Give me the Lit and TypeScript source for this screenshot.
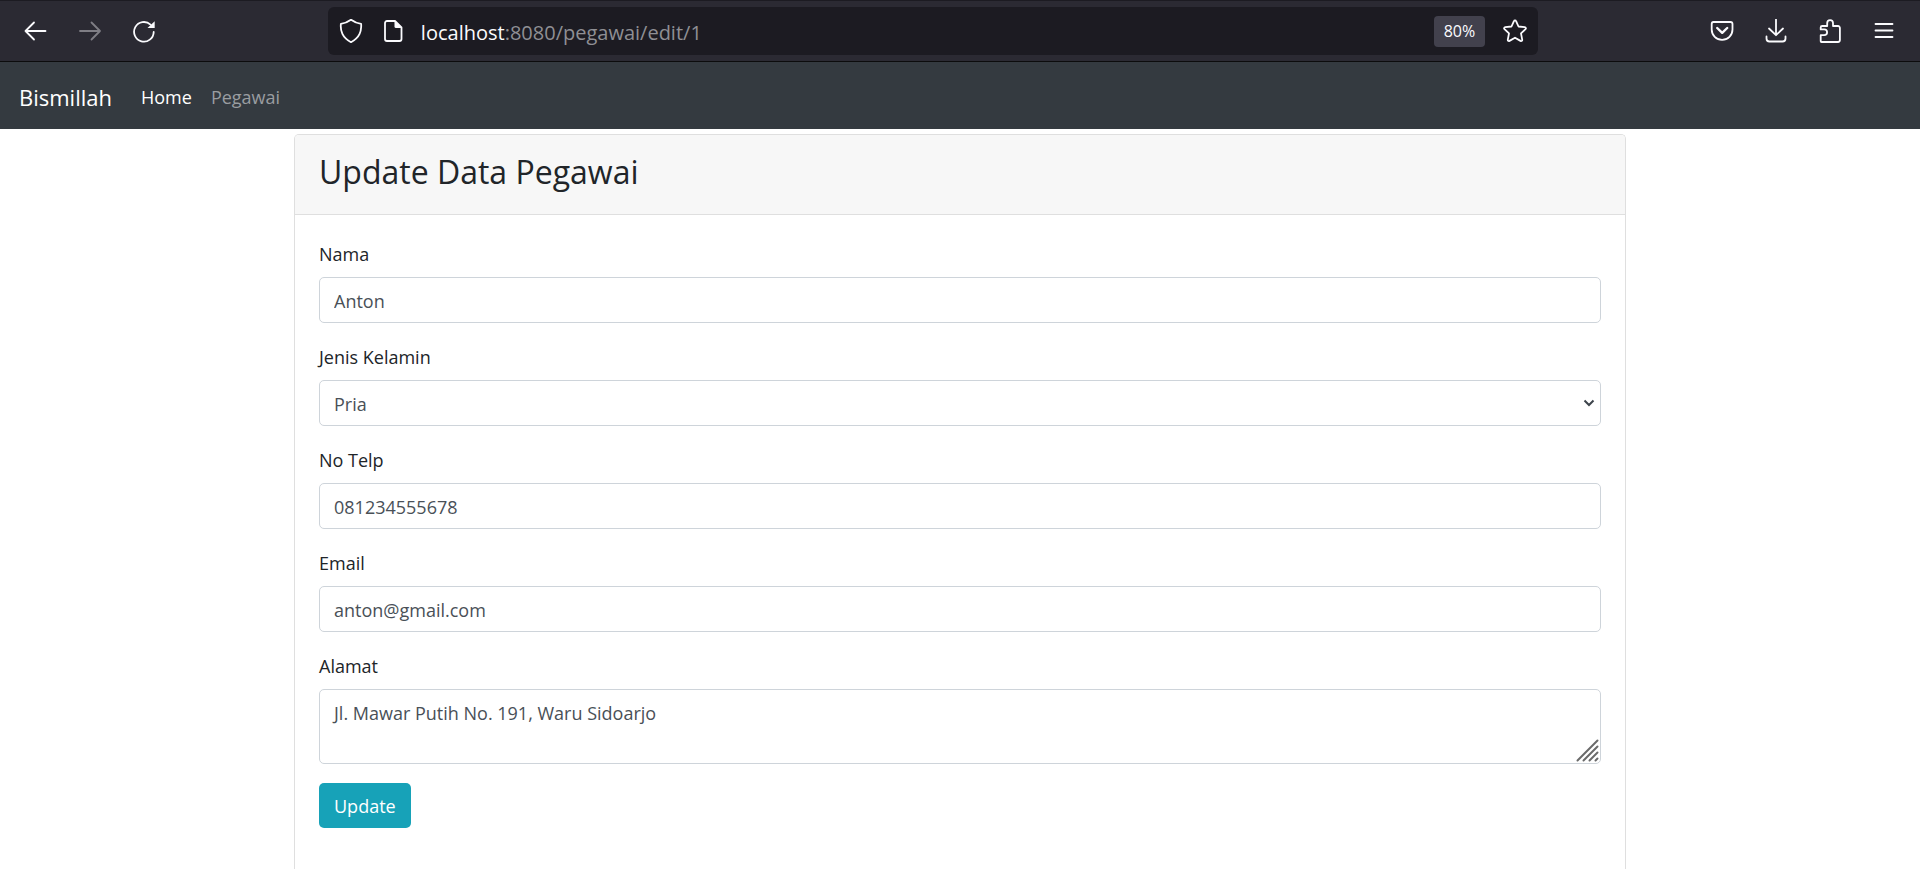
import { LitElement, html, css, svg } from "lit";
import { customElement } from "lit/decorators.js";

const icon = (body: unknown, size = 24, view = 24) => html`<svg
  class="icon"
  width=${size}
  height=${size}
  viewBox="0 0 ${view} ${view}"
  aria-hidden="true"
>${body}</svg>`;

const icons = {
  back: svg`<path d="M21.500 12H1.500M10 3.500L1.500 12l8.500 8.500"/>`,
  forward: svg`<path d="M2 12h20M13.500 3.500L22 12l-8.500 8.500"/>`,
  reload: svg`<path d="M21.700 13A9.800 9.800 0 1 1 18.500 5.600"/><path class="solid" d="M22.700 2.200v6.800h-7.200z"/>`,
  shield: svg`<path d="M12 .7C9.500 2.500 5.500 4.300 1.900 4.900c0 0-.6 5.500 1.500 10C5.200 18.700 8.500 21.300 12 23.200c3.500-1.900 6.800-4.500 8.600-8.300 2.100-4.500 1.500-10 1.500-10C18.500 4.300 14.500 2.500 12 .7z"/>`,
  file: svg`<path d="M14 2H6a2 2 0 0 0-2 2v16a2 2 0 0 0 2 2h12.500a2 2 0 0 0 2-2V8.500z"/><path class="solid" d="M13.500 2v5.500a1.500 1.500 0 0 0 1.500 1.500h6z"/>`,
  star: svg`<path d="M12 1.300c.5 0 .9.300 1.100.8l2.400 5.400 6.200.7c1.200.2 1.600 1.200.8 2l-4.500 4.200 1.200 6.200c.2 1.200-.7 1.800-1.700 1.300L12 18.700l-5.500 3.200c-1 .5-1.900-.1-1.700-1.300L6 14.400l-4.500-4.200c-.8-.8-.4-1.800.8-2l6.200-.7 2.400-5.400c.2-.5.6-.8 1.100-.8z"/>`,
  pocket: svg`<path d="M3.500 3h17a2 2 0 0 1 2 2v5.500a10.200 10.200 0 0 1-20.800 0V5a2 2 0 0 1 1.800-2z"/><path stroke-width="2.400" d="M7.200 9l5 4.800 5-4.800"/>`,
  download: svg`<path d="M12 .5v15M5 9.500l7 6.700 7-6.700M2.500 17.500v2a3 3 0 0 0 3 3h13a3 3 0 0 0 3-3v-2"/>`,
  puzzle: svg`<path d="M3.500 23a.8.800 0 0 1-.8-.8v-6h3.500a2.900 2.900 0 0 0 0-5.800H2.700V8.500a1.500 1.500 0 0 1 1.500-1.500h5V4a2.900 2.900 0 0 1 5.800 0v3h5A1.900 1.900 0 0 1 21.900 8.900v12.200a1.900 1.900 0 0 1-1.900 1.900z"/>`,
  menu: svg`<path stroke-width="1.800" d="M3.500 5h17M3.500 11.500h17M3.500 18h17"/>`,
};

@customElement("browser-bar")
export class BrowserBar extends LitElement {
  static styles = css`
    :host {
      display: flex;
      align-items: center;
      box-sizing: border-box;
      height: 62px;
      padding: 0 9px;
      background: #2b2a33;
      border-top: 1px solid #1c1b22;
      border-bottom: 1px solid #0c0c0d;
      color: #fbfbfe;
    }
    .group {
      display: flex;
    }
    .spring {
      flex: 33;
    }
    button {
      border: 0;
      padding: 0;
      background: none;
      color: inherit;
      font: inherit;
    }
    .tool {
      display: grid;
      place-items: center;
      width: 54px;
      height: 48px;
    }
    .tool:disabled {
      color: #7f7e85;
    }
    .icon {
      display: block;
      flex: none;
      fill: none;
      stroke: currentColor;
      stroke-width: 1.8;
      stroke-linecap: round;
      stroke-linejoin: round;
    }
    .solid {
      fill: currentColor;
      stroke: none;
    }
    .address {
      flex: 250;
      display: flex;
      align-items: center;
      box-sizing: border-box;
      height: 48px;
      padding: 0 11px;
      border-radius: 6px;
      background: #1c1b22;
    }
    .info {
      margin-left: 18px;
    }
    .url {
      flex: 1;
      margin-left: 16px;
      padding-top: 3px;
      font-size: 20px;
      line-height: 28px;
      color: #8f8f94;
    }
    .host {
      color: #fbfbfe;
    }
    .zoom {
      height: 31px;
      padding: 0 10px;
      margin-right: 18px;
      border-radius: 4px;
      background: #42414d;
      font-size: 16px;
    }
  `;

  render() {
    return html`
      <div class="group">
        <button class="tool" aria-label="Back">${icon(icons.back)}</button>
        <button class="tool" aria-label="Forward" disabled>${icon(icons.forward)}</button>
        <button class="tool" aria-label="Reload">${icon(icons.reload)}</button>
      </div>
      <div class="spring"></div>
      <div class="address">
        <button aria-label="Tracking protection">${icon(icons.shield)}</button>
        <button class="info" aria-label="Site information">${icon(icons.file)}</button>
        <div class="url"><span class="host">localhost</span>:8080/pegawai/edit/1</div>
        <button class="zoom">80%</button>
        <button aria-label="Bookmark">${icon(icons.star)}</button>
      </div>
      <div class="spring"></div>
      <div class="group">
        <button class="tool" aria-label="Pocket">${icon(icons.pocket)}</button>
        <button class="tool" aria-label="Downloads">${icon(icons.download)}</button>
        <button class="tool" aria-label="Extensions">${icon(icons.puzzle)}</button>
        <button class="tool" aria-label="Menu">${icon(icons.menu)}</button>
      </div>
    `;
  }
}

@customElement("app-root")
export class AppRoot extends LitElement {
  static styles = css`
    :host {
      display: flex;
      flex-direction: column;
      height: 100vh;
      overflow: hidden;
      background: #fff;
      color: #212529;
      font-family: "Open Sans", "Noto Sans", sans-serif;
      font-size: 18px;
      line-height: 29px;
    }
    .navbar {
      display: flex;
      align-items: center;
      flex: none;
      box-sizing: border-box;
      height: 67px;
      padding: 4px 19px 0;
      background: #343a40;
    }
    .navbar a {
      color: #9a9da0;
      text-decoration: none;
    }
    .navbar a.brand {
      margin-right: 29px;
      color: #fff;
      font-size: 22px;
    }
    .navbar a.active {
      margin-right: 19px;
      color: #fff;
    }
    .container {
      flex: 1;
      display: flex;
      box-sizing: border-box;
      width: 100%;
      max-width: 1368px;
      margin: 0 auto;
      padding: 5px 18px 0;
    }
    .card {
      flex: 1;
      border: 1px solid #dfdfdf;
      border-bottom: 0;
      border-radius: 5px 5px 0 0;
    }
    .card-header {
      padding: 17px 24px 22px;
      background: #f7f7f7;
      border-bottom: 1px solid #dfdfdf;
      border-radius: 4px 4px 0 0;
    }
    h3 {
      margin: 0;
      font-size: 32px;
      font-weight: 400;
      line-height: 40px;
    }
    form {
      padding: 24px;
    }
    .field {
      display: flex;
      flex-direction: column;
      gap: 7px;
      margin-bottom: 19px;
    }
    label {
      line-height: 31px;
    }
    .control-wrap {
      position: relative;
      display: grid;
    }
    .control {
      display: block;
      box-sizing: border-box;
      width: 100%;
      height: 46px;
      margin: 0;
      padding: 8px 14px 7px;
      border: 1px solid #ced4da;
      border-radius: 5px;
      outline: 0;
      appearance: none;
      background: #fff;
      color: #495057;
      font: inherit;
    }
    select.control,
    textarea.control {
      padding: 9px 14px 6px;
    }
    textarea.control {
      height: 75px;
      resize: vertical;
    }
    textarea::-webkit-resizer {
      display: none;
    }
    .chevron,
    .grip {
      position: absolute;
      fill: none;
      pointer-events: none;
    }
    .chevron {
      top: 19px;
      right: 6px;
      stroke: #3d444b;
      stroke-width: 2;
    }
    .grip {
      right: 2px;
      bottom: 2px;
      stroke: #6a6a6a;
      stroke-width: 2;
      stroke-linecap: round;
    }
    .submit {
      height: 45px;
      padding: 2px 15px 0;
      border: 0;
      border-radius: 5px;
      background: #17a2b8;
      color: #fff;
      font: inherit;
    }
  `;

  private textField(id: string, label: string, type: string, value: string) {
    return html`<div class="field">
      <label for=${id}>${label}</label>
      <input class="control" id=${id} type=${type} .value=${value} />
    </div>`;
  }

  render() {
    return html`
      <browser-bar></browser-bar>
      <nav class="navbar">
        <a class="brand" href="#">Bismillah</a>
        <a class="active" href="#">Home</a>
        <a href="#">Pegawai</a>
      </nav>
      <main class="container">
        <section class="card">
          <header class="card-header"><h3>Update Data Pegawai</h3></header>
          <form @submit=${(e: Event) => e.preventDefault()}>
            ${this.textField("nama", "Nama", "text", "Anton")}
            <div class="field">
              <label for="kelamin">Jenis Kelamin</label>
              <div class="control-wrap">
                <select class="control" id="kelamin">
                  <option selected>Pria</option>
                  <option>Wanita</option>
                </select>
                <svg class="chevron" width="12" height="9" viewBox="0 0 12 9" aria-hidden="true">
                  <path d="M1.500 1.500L6 6l4.500-4.500" />
                </svg>
              </div>
            </div>
            ${this.textField("telp", "No Telp", "tel", "081234555678")}
            ${this.textField("email", "Email", "email", "anton@gmail.com")}
            <div class="field">
              <label for="alamat">Alamat</label>
              <div class="control-wrap">
                <textarea
                  class="control"
                  id="alamat"
                  .value=${"Jl. Mawar Putih No. 191, Waru Sidoarjo"}
                ></textarea>
                <svg class="grip" width="23" height="23" viewBox="0 0 23 23" aria-hidden="true">
                  <path d="M1.500 21.500l20-20M7.500 21.500l14-14M13.500 21.500l8-8M19.500 21.500l2-2" />
                </svg>
              </div>
            </div>
            <button class="submit" type="submit">Update</button>
          </form>
        </section>
      </main>
    `;
  }
}
